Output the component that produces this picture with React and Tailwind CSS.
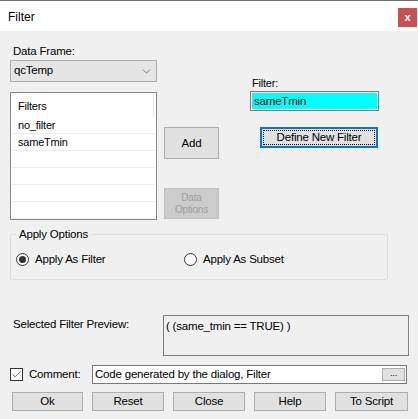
import { ChevronDown, Check } from "lucide-react";

const font = { fontFamily: '"Liberation Sans", Arial, sans-serif' };

const Btn = ({ children, className = "" }) => (
  <button
    className={`bg-[#e1e1e1] border border-[#adadad] text-[#000] font-normal flex items-center justify-center leading-[13px] ${className}`}
  >
    {children}
  </button>
);

const Radio = ({ checked, label }) => (
  <div className="flex items-center gap-[6px]">
    <div className="w-[13px] h-[13px] rounded-full border border-[#333] bg-white flex items-center justify-center">
      {checked && <div className="w-[7px] h-[7px] rounded-full bg-[#333]" />}
    </div>
    <span>{label}</span>
  </div>
);

const App = () => {
  const rows = ["no_filter", "sameTmin", "", "", "", ""];

  return (
    <div
      style={font}
      className="w-[418px] h-[419px] bg-[#f0f0f0] border-t border-[#707070] text-[11px] tracking-[-0.2px] text-black overflow-hidden"
    >
      {/* ===== TITLE BAR ===== */}
      <div className="h-[30px] bg-white flex justify-between">
        <span className="text-[12px] tracking-normal pl-[8px] pt-[9px] leading-[14px]">Filter</span>
        <div className="mt-[7px] mr-[1px] w-[19px] h-[19px] bg-[#c75050] text-white font-bold text-[11px] flex items-center justify-center leading-none">
          x
        </div>
      </div>

      {/* ===== TOP SECTION ===== */}
      <div className="flex pl-[10px]">
        {/* left column */}
        <div className="w-[147px]">
          <div className="mt-[13px] h-[14px] leading-[14px] pl-[3px] text-[11.5px]">Data Frame:</div>
          <div className="mt-[2px] h-[22px] bg-[#e5e5e5] border border-[#acacac] flex items-center justify-between pl-[3px] pr-[3px] text-[11.5px]">
            <span>qcTemp</span>
            <ChevronDown size={13} strokeWidth={1.2} className="text-[#444]" />
          </div>
          <div className="mt-[10px] h-[128px] bg-white border border-[#828790] pl-[1px] pr-[1px]">
            <div className="h-[24px] flex">
              <div className="flex-1 pl-[6px] pt-[7px] leading-[13px]">Filters</div>
              <div className="w-[1px] bg-[#e5e5e5]" />
              <div className="w-[1px]" />
            </div>
            {rows.map((r, i) => (
              <div
                key={i}
                className="h-[17px] border-b border-[#ececec] pl-[6px] leading-[17px]"
              >
                {r}
              </div>
            ))}
          </div>
        </div>

        {/* middle column */}
        <div className="ml-[7px] w-[55px]">
          <Btn className="mt-[96px] w-[55px] h-[32px] text-[11.5px]">Add</Btn>
          <button className="mt-[29px] w-[55px] h-[31px] bg-[#cccccc] border border-[#bfbfbf] text-[#9d9d9d] font-normal text-[10px] leading-[12px]">
            Data
            <br />
            Options
          </button>
        </div>

        {/* right column */}
        <div className="ml-[31px]">
          <div className="mt-[45px] h-[14px] leading-[14px] pl-[2px]">Filter:</div>
          <div className="mt-[1px] w-[129px] h-[20px] border border-[#7a7a7a] p-[1px] bg-white">
            <div className="h-full bg-[#00ffff] pl-[2px] leading-[16px] text-[11.5px]">sameTmin</div>
          </div>
          <div className="mt-[16px] ml-[10px] w-[118px] h-[21px] border-2 border-[#0078d7] bg-[#e1e1e1] p-[1px]">
            <div className="h-full border border-dotted border-black flex items-center justify-center text-[11.5px] font-normal">
              Define New Filter
            </div>
          </div>
        </div>
      </div>

      {/* ===== APPLY OPTIONS ===== */}
      <fieldset className="mt-[7px] ml-[10px] w-[378px] h-[53px] border border-[#dcdcdc] rounded-[2px]">
        <legend className="ml-[5px] px-[3px] leading-[14px] text-[11.5px]">Apply Options</legend>
        <div className="flex pl-[5px] pt-[10px] text-[11.5px]">
          <div className="w-[168px]">
            <Radio checked label="Apply As Filter" />
          </div>
          <Radio label="Apply As Subset" />
        </div>
      </fieldset>

      {/* ===== PREVIEW ===== */}
      <div className="flex mt-[35px] pl-[13px]">
        <div className="w-[150px] pt-[2px] leading-[14px] text-[11.5px]">Selected Filter Preview:</div>
        <div className="w-[246px] h-[41px] border border-[#7f7f7f] bg-[#f0f0f0] pl-[2px] pt-[3px] leading-[14px] text-[11.5px]">
          ( (same_tmin == TRUE) )
        </div>
      </div>

      {/* ===== COMMENT ===== */}
      <div className="flex items-center mt-[9px] pl-[10px]">
        <div className="w-[13px] h-[13px] border border-[#333] bg-white flex items-center justify-center">
          <Check size={11} strokeWidth={1.6} className="text-[#333]" />
        </div>
        <span className="ml-[6px] w-[63px] text-[11.5px]">Comment:</span>
        <div className="w-[315px] h-[19px] border border-[#7a7a7a] bg-white flex items-center justify-between pl-[2px] pr-[1px]">
          <span className="text-[11.5px]">Code generated by the dialog, Filter</span>
          <div className="w-[23px] h-[13px] bg-[#e1e1e1] border border-[#adadad] flex items-center justify-center text-[9px] leading-none pb-[2px]">
            ...
          </div>
        </div>
      </div>

      {/* ===== BUTTONS ===== */}
      <div className="flex gap-[9px] mt-[8px] pl-[12px] text-[11.5px]">
        <Btn className="w-[71px] h-[19px]">Ok</Btn>
        <Btn className="w-[72px] h-[19px]">Reset</Btn>
        <Btn className="w-[72px] h-[19px]">Close</Btn>
        <Btn className="w-[72px] h-[19px]">Help</Btn>
        <Btn className="w-[73px] h-[19px]">To Script</Btn>
      </div>
    </div>
  );
};

export default App;
